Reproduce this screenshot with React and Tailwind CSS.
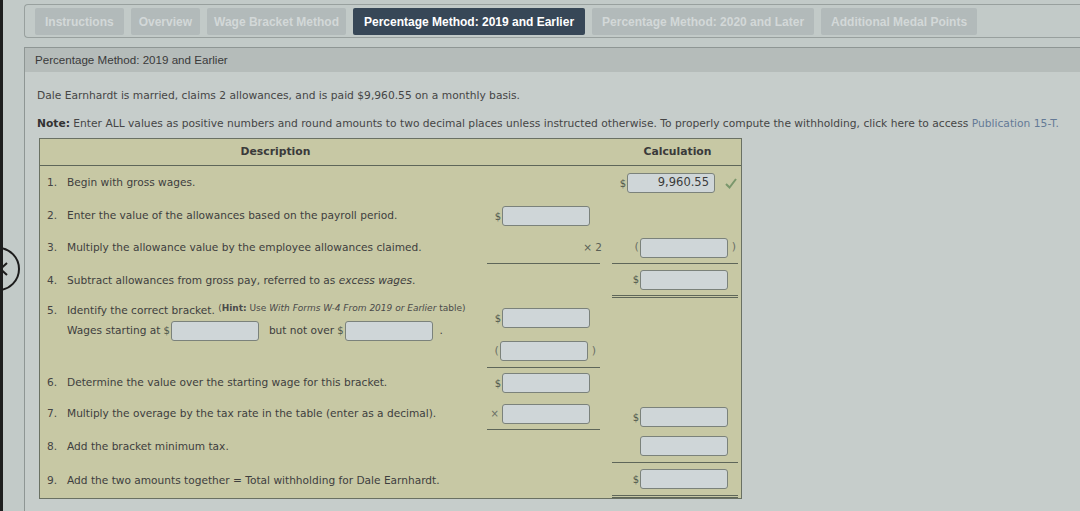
import React from "react";

const V = "font-['DejaVu_Sans',Verdana,sans-serif]";
const A = "font-['Liberation_Sans',Arial,sans-serif]";

function Box({ w = "w-[88px]", children, cls = "" }) {
  return (
    <div className={`${w} h-[20px] bg-[#cfd6d8] border border-[#7b827b] rounded-[3px] flex items-center justify-end pr-[5px] text-[11.5px] text-[#3a3a3a] ${cls}`}>
      {children}
    </div>
  );
}

function Dollar() {
  return <span className="text-[10px] text-[#505a4e] mr-[1px]">$</span>;
}

function Under({ type, side }) {
  const pos = side === "mid" ? "ml-[2px] mr-[12px]" : "mr-[5px]";
  if (type === "single") return <div className={`h-0 border-t border-[#5e6659] ${pos}`} />;
  if (type === "double") return <div className={`h-[3px] border-t border-b border-[#5e6659] ${pos}`} />;
  return <div className="h-0" />;
}

function Row({ h, n, text, mid, calc, midLine, calcLine }) {
  return (
    <div className={`grid grid-cols-[445px_127px_131px] ${h}`}>
      <div className="flex items-center">
        <div className="w-[27px] pl-[7px] text-[10.6px] text-[#444]">{n}.</div>
        <div className="text-[10.6px] text-[#3e3e3e] whitespace-nowrap">{text}</div>
      </div>
      <div className="flex flex-col">
        <div className="flex-1 flex items-center justify-end pr-[22px]">{mid}</div>
        <Under type={midLine} side="mid" />
      </div>
      <div className="flex flex-col">
        <div className="flex-1 flex items-center justify-end pr-[15px]">{calc}</div>
        <Under type={calcLine} side="calc" />
      </div>
    </div>
  );
}

export default function App() {
  const tabs = [
    ["Instructions", "px-[10px]"],
    ["Overview", "px-[8px]"],
    ["Wage Bracket Method", "px-[7px]"],
    ["Percentage Method: 2019 and Earlier", "active"],
    ["Percentage Method: 2020 and Later", "px-[10px]"],
    ["Additional Medal Points", "px-[10px]"],
  ];
  return (
    <div className={`relative w-[1080px] h-[511px] overflow-hidden bg-[#c2cac8] border-l-[3px] border-[#1d1e1e] ${V}`}>
      <div className="pl-[21px]">
        {/* tab bar */}
        <div className="mt-[4px] h-[34px] border border-r-0 border-[#98a09e] rounded-l-[4px] pl-[10px] pt-[3px] flex items-start gap-[7px]">
          {tabs.map(([t, p]) => (
            <div
              key={t}
              className={`h-[27px] flex items-center rounded-[2px] text-[12px] font-bold whitespace-nowrap ${A} ${
                p === "active" ? "px-[11px] bg-[#374757] text-white" : `${p} bg-[#b2baba] text-[#d3d8d8]`
              }`}
            >
              {t}
            </div>
          ))}
        </div>

        {/* panel */}
        <div className="mt-[9px] border-l border-t border-[#8e9694] bg-[#c6cdcb] h-[470px]">
          <div className={`h-[24px] bg-[#b5bcba] flex items-center pl-[10px] text-[11.6px] text-[#3a3a3a] ${A}`}>
            Percentage Method: 2019 and Earlier
          </div>
          <div className="pl-[12px]">
            <p className="mt-[17px] leading-[14px] text-[10.7px] text-[#454545] whitespace-nowrap">
              Dale Earnhardt is married, claims 2 allowances, and is paid $9,960.55 on a monthly basis.
            </p>
            <p className="mt-[14px] leading-[14px] text-[10.7px] text-[#454545] whitespace-nowrap">
              <span className="font-bold text-[#333]">Note:</span> Enter ALL values as positive numbers and round amounts to two decimal places unless instructed otherwise. To properly compute the withholding, click here to access{" "}
              <span className="text-[#647a96]">Publication 15-T.</span>
            </p>

            {/* table */}
            <div className="mt-[7px] ml-[2px] w-[703px] border border-[#6a7163] bg-[#c7c8a4]">
              <div className="grid grid-cols-[445px_127px_131px] h-[27px] border-b border-[#5e6659] text-[10.8px] font-bold text-[#3a3a3a]">
                <div className="flex items-center justify-center pl-[26px]">Description</div>
                <div />
                <div className="flex items-center justify-center">Calculation</div>
              </div>

              <Row
                h="h-[34px]"
                n="1"
                text="Begin with gross wages."
                calc={
                  <>
                    <Dollar />
                    <Box cls="text-[#3b3b3b]">9,960.55</Box>
                    <svg className="ml-[10px] mr-[-9px]" width="12" height="11" viewBox="0 0 12 11">
                      <path d="M1 6 L4.5 9.5 L11 1" fill="none" stroke="#7a976c" strokeWidth="2" />
                    </svg>
                  </>
                }
              />
              <Row
                h="h-[32px]"
                n="2"
                text="Enter the value of the allowances based on the payroll period."
                mid={
                  <>
                    <Dollar />
                    <Box />
                  </>
                }
              />
              <Row
                h="h-[32px]"
                n="3"
                text="Multiply the allowance value by the employee allowances claimed."
                mid={<span className="mr-[-12px] text-[10.5px] text-[#5a5f56]">× 2</span>}
                midLine="single"
                calc={
                  <>
                    <span className="text-[11px] text-[#6a6f66] mr-[1px]">(</span>
                    <Box />
                    <span className="text-[11px] text-[#6a6f66] ml-[4px] mr-[-8px]">)</span>
                  </>
                }
                calcLine="single"
              />
              <Row
                h="h-[34px]"
                n="4"
                text={
                  <>
                    Subtract allowances from gross pay, referred to as <i>excess wages</i>.
                  </>
                }
                calc={
                  <>
                    <Dollar />
                    <Box />
                  </>
                }
                calcLine="double"
              />

              {/* row 5 */}
              <div className="grid grid-cols-[445px_127px_131px] h-[70px]">
                <div className="flex flex-col pt-[4px]">
                  <div className="flex items-center h-[18px]">
                    <div className="w-[27px] pl-[7px] text-[10.6px] text-[#444]">5.</div>
                    <div className="text-[10.6px] text-[#3e3e3e] whitespace-nowrap">
                      Identify the correct bracket.{" "}
                      <span className="relative top-[-3px] text-[9px] text-[#4a4a4a]">
                        (<b>Hint:</b> Use <i>With Forms W-4 From 2019 or Earlier</i> table)
                      </span>
                    </div>
                  </div>
                  <div className="flex items-center h-[20px] pl-[27px] mt-[1px] text-[10.6px] text-[#3e3e3e] whitespace-nowrap">
                    <span>Wages starting at</span>
                    <span className="ml-[3px]"><Dollar /></span>
                    <Box />
                    <span className="ml-[10px]">but not over</span>
                    <span className="ml-[3px]"><Dollar /></span>
                    <Box />
                    <span className="ml-[7px]">.</span>
                  </div>
                </div>
                <div className="flex flex-col">
                  <div className="h-[36px] flex items-center justify-end pr-[22px] pt-[4px]">
                    <Dollar />
                    <Box />
                  </div>
                  <div className="flex-1 flex items-center justify-end pr-[16px] pt-[1px]">
                    <span className="text-[11px] text-[#6a6f66] mr-[1px]">(</span>
                    <Box />
                    <span className="text-[11px] text-[#6a6f66] ml-[4px]">)</span>
                  </div>
                  <Under type="single" side="mid" />
                </div>
                <div />
              </div>

              <Row
                h="h-[30px]"
                n="6"
                text="Determine the value over the starting wage for this bracket."
                mid={
                  <>
                    <Dollar />
                    <Box />
                  </>
                }
              />
              <Row
                h="h-[32px]"
                n="7"
                text="Multiply the overage by the tax rate in the table (enter as a decimal)."
                mid={
                  <>
                    <span className="text-[10px] text-[#6a6f66] mr-[3px]">×</span>
                    <Box />
                  </>
                }
                midLine="single"
                calc={
                  <div className="flex items-center mt-[6px]">
                    <Dollar />
                    <Box />
                  </div>
                }
              />
              <Row
                h="h-[33px]"
                n="8"
                text="Add the bracket minimum tax."
                calc={<Box />}
                calcLine="single"
              />
              <Row
                h="h-[35px]"
                n="9"
                text="Add the two amounts together = Total withholding for Dale Earnhardt."
                calc={
                  <>
                    <Dollar />
                    <Box />
                  </>
                }
                calcLine="double"
              />
            </div>
          </div>
        </div>
      </div>

      {/* left nav circle overlay */}
      <div className="absolute left-[-27px] top-[247px] w-[44px] h-[44px] rounded-full border-2 border-[#1c1c1c] flex items-center justify-end pr-[10px]">
        <svg width="9" height="14" viewBox="0 0 9 14">
          <path d="M8 1 L1.5 7 L8 13" fill="none" stroke="#1c1c1c" strokeWidth="2" />
        </svg>
      </div>
    </div>
  );
}
